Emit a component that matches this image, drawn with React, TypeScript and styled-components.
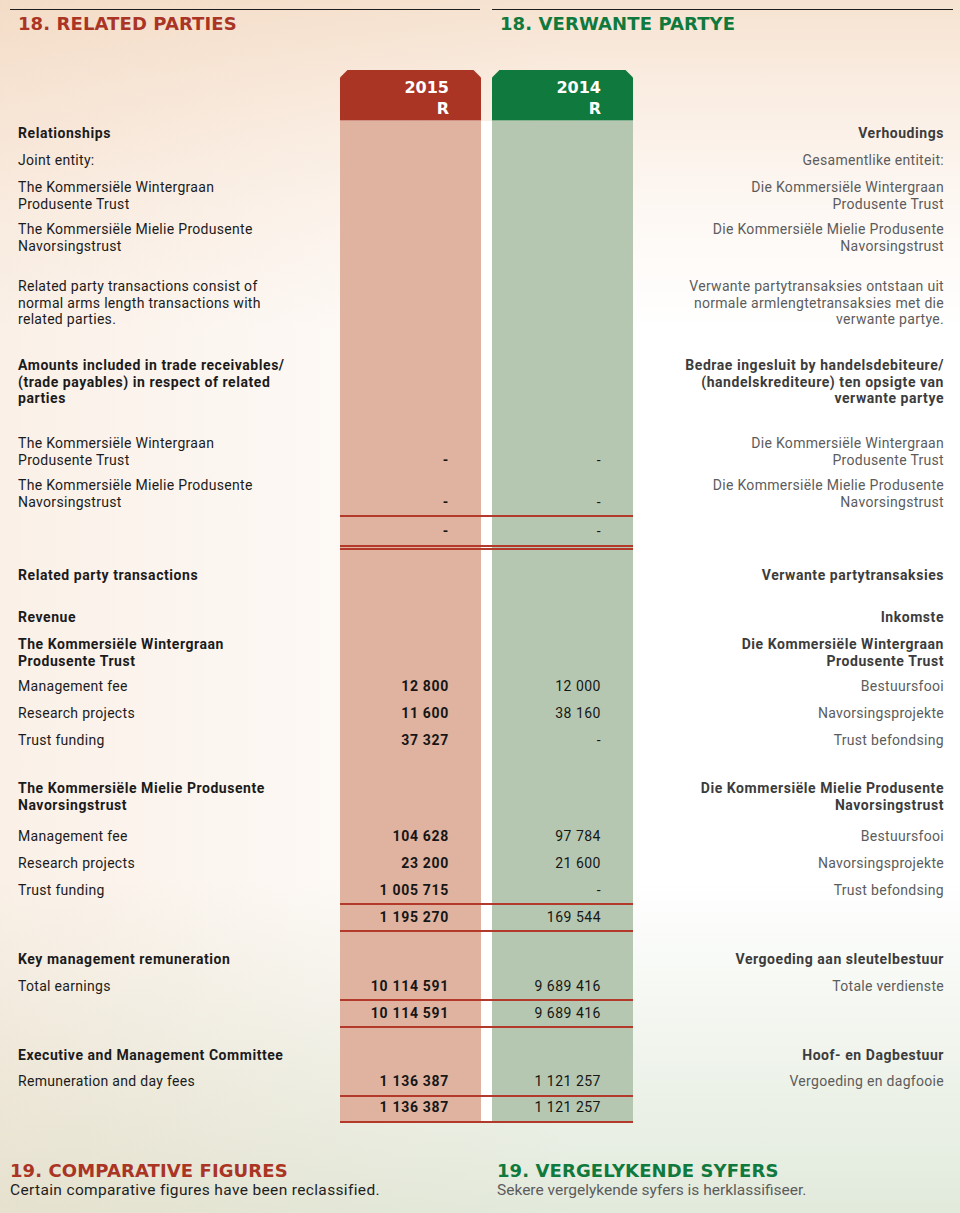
import React from "react";
import styled, { createGlobalStyle } from "styled-components";

const GlobalStyle = createGlobalStyle`
  html, body { margin: 0; padding: 0; background: #ffffff; }
  body { font-family: Roboto, "Liberation Sans", sans-serif; }
  * { box-sizing: border-box; }
`;

const RED = "#aa3525";
const GREEN = "#10793d";
const RULE = "#b3392a";
const COLS = "322px 141px 11px 141px 1fr";

const Page = styled.div`
  width: 960px;
  min-height: 1213px;
  padding-top: 9px;
  background:
    linear-gradient(90deg, rgba(238, 205, 175, 0.3) 0%, rgba(255, 255, 255, 0) 60%),
    linear-gradient(180deg, #f6e3d1 0px, #faede2 90px, #fdf7f2 200px, #ffffff 330px, #ffffff 880px, #f1f5ee 1040px, #e2eadc 1213px);
`;

const TopBar = styled.div`
  display: grid;
  grid-template-columns: 470px 461px;
  column-gap: 12px;
  padding-left: 10px;
`;

const SectionHead = styled.div`
  border-top: 1.5px solid #1d1d1d;
  padding: 3px 0 0 8px;
`;

const Heading = styled.h2<{ $tone: "red" | "green" }>`
  margin: 0;
  font-family: "DejaVu Sans", "Liberation Sans", sans-serif;
  font-weight: bold;
  font-size: 18px;
  line-height: 22px;
  letter-spacing: 0.1px;
  color: ${(p) => (p.$tone === "red" ? RED : GREEN)};
`;

const Table = styled.div`
  margin-top: 34.5px;
  padding: 0 16px 0 18px;
`;

const Row = styled.div<{ $pt: number }>`
  display: grid;
  grid-template-columns: ${COLS};
  --pt: ${(p) => p.$pt}px;
  font-size: 14px;
  line-height: 16.5px;
  letter-spacing: 0.3px;
`;

const YearHead = styled.div<{ $tone: "red" | "green" }>`
  height: 51px;
  padding: 7px 32px 0 0;
  text-align: right;
  background: ${(p) => (p.$tone === "red" ? RED : GREEN)};
  clip-path: polygon(8px 0, calc(100% - 8px) 0, 100% 8px, 100% 100%, 0 100%, 0 8px);
  color: #ffffff;
  font-family: "DejaVu Sans", "Liberation Sans", sans-serif;
  font-weight: bold;
  font-size: 16px;
  line-height: 21px;
  letter-spacing: 0;
`;

const EnCell = styled.div<{ $bold?: boolean }>`
  padding-top: var(--pt);
  color: #1b1b1b;
  font-weight: ${(p) => (p.$bold ? 700 : 400)};
  letter-spacing: ${(p) => (p.$bold ? "0.55px" : "0.3px")};
`;

const AfCell = styled.div<{ $bold?: boolean }>`
  padding-top: var(--pt);
  text-align: right;
  color: ${(p) => (p.$bold ? "#3c3c3c" : "#5c5c5c")};
  font-weight: ${(p) => (p.$bold ? 700 : 400)};
  letter-spacing: ${(p) => (p.$bold ? "0.55px" : "0.3px")};
`;

const Line = styled.span`
  display: block;
  white-space: nowrap;
`;

const toneBg = (t: "red" | "green" | "gap") =>
  t === "red" ? "#dfb3a0" : t === "green" ? "#b5c7b0" : "#ffffff";

const ValueCell = styled.div<{ $tone: "red" | "green"; $bold?: boolean }>`
  padding: var(--pt) 32px 0 0;
  display: flex;
  align-items: flex-end;
  justify-content: flex-end;
  background: ${(p) => toneBg(p.$tone)};
  color: #161616;
  font-weight: ${(p) => (p.$bold ? 700 : 400)};
  letter-spacing: ${(p) => (p.$bold ? "0.7px" : "0.5px")};
`;

const Gap = styled.div`
  background: #ffffff;
`;

const RuleCell = styled.div<{ $tone: "red" | "green" | "gap"; $double?: boolean }>`
  box-sizing: content-box;
  height: var(--pt);
  background: ${(p) => toneBg(p.$tone)};
  border-bottom: ${(p) => (p.$double ? `5px double ${RULE}` : `2px solid ${RULE}`)};
`;

const Footer = styled.div`
  margin-top: 38.5px;
  display: grid;
  grid-template-columns: 487px 1fr;
  padding-left: 10px;
`;

const FootHeading = styled(Heading)`
  line-height: 20px;
`;

const FootText = styled.p<{ $tone: "red" | "green" }>`
  margin: 0;
  font-size: 15.5px;
  line-height: 19px;
  letter-spacing: ${(p) => (p.$tone === "red" ? "0.35px" : "0px")};
  color: ${(p) => (p.$tone === "red" ? "#1e1e1e" : "#5c5c5c")};
`;

type TextRow = {
  kind: "row";
  pt: number;
  en?: string[];
  af?: string[];
  bold?: boolean;
  v15?: string;
  v14?: string;
};
type RuleRow = { kind: "rule"; pt: number; double?: boolean };
type RowDef = TextRow | RuleRow;

const WG_EN = ["The Kommersiële Wintergraan", "Produsente Trust"];
const WG_AF = ["Die Kommersiële Wintergraan", "Produsente Trust"];
const MP_EN = ["The Kommersiële Mielie Produsente", "Navorsingstrust"];
const MP_AF = ["Die Kommersiële Mielie Produsente", "Navorsingstrust"];

const r = (pt: number, en?: string[], af?: string[], v15?: string, v14?: string, bold?: boolean): TextRow => ({
  kind: "row",
  pt,
  en,
  af,
  v15,
  v14,
  bold,
});
const rule = (pt: number, double?: boolean): RuleRow => ({ kind: "rule", pt, double });

const rows: RowDef[] = [
  r(4.75, ["Relationships"], ["Verhoudings"], undefined, undefined, true),
  r(10.5, ["Joint entity:"], ["Gesamentlike entiteit:"]),
  r(10.5, WG_EN, WG_AF),
  r(9, MP_EN, MP_AF),
  r(
    24,
    ["Related party transactions consist of", "normal arms length transactions with", "related parties."],
    ["Verwante partytransaksies ontstaan uit", "normale armlengtetransaksies met die", "verwante partye."]
  ),
  r(
    29.5,
    ["Amounts included in trade receivables/", "(trade payables) in respect of related", "parties"],
    ["Bedrae ingesluit by handelsdebiteure/", "(handelskrediteure) ten opsigte van", "verwante partye"],
    undefined,
    undefined,
    true
  ),
  r(28.5, WG_EN, WG_AF, "-", "-"),
  r(9, MP_EN, MP_AF, "-", "-"),
  rule(4.25),
  r(6.75, undefined, undefined, "-", "-"),
  rule(4.75, true),
  r(17.75, ["Related party transactions"], ["Verwante partytransaksies"], undefined, undefined, true),
  r(25.5, ["Revenue"], ["Inkomste"], undefined, undefined, true),
  r(10.5, WG_EN, WG_AF, undefined, undefined, true),
  r(9, ["Management fee"], ["Bestuursfooi"], "12 800", "12 000"),
  r(10.5, ["Research projects"], ["Navorsingsprojekte"], "11 600", "38 160"),
  r(10.5, ["Trust funding"], ["Trust befondsing"], "37 327", "-"),
  r(31.5, MP_EN, MP_AF, undefined, undefined, true),
  r(15, ["Management fee"], ["Bestuursfooi"], "104 628", "97 784"),
  r(10.5, ["Research projects"], ["Navorsingsprojekte"], "23 200", "21 600"),
  r(10.5, ["Trust funding"], ["Trust befondsing"], "1 005 715", "-"),
  rule(3.75),
  r(4.75, undefined, undefined, "1 195 270", "169 544"),
  rule(3.75),
  r(19.75, ["Key management remuneration"], ["Vergoeding aan sleutelbestuur"], undefined, undefined, true),
  r(10.5, ["Total earnings"], ["Totale verdienste"], "10 114 591", "9 689 416"),
  rule(3.75),
  r(4.75, undefined, undefined, "10 114 591", "9 689 416"),
  rule(3.75),
  r(19.75, ["Executive and Management Committee"], ["Hoof- en Dagbestuur"], undefined, undefined, true),
  r(9.5, ["Remuneration and day fees"], ["Vergoeding en dagfooie"], "1 136 387", "1 121 257"),
  rule(4.75),
  r(2.75, undefined, undefined, "1 136 387", "1 121 257"),
  rule(4.75),
];

const Lines = ({ lines }: { lines?: string[] }) => (
  <>
    {(lines ?? []).map((l, i) => (
      <Line key={i}>{l}</Line>
    ))}
  </>
);

export default function App() {
  return (
    <>
      <GlobalStyle />
      <Page>
        <TopBar>
          <SectionHead>
            <Heading $tone="red">18. RELATED PARTIES</Heading>
          </SectionHead>
          <SectionHead>
            <Heading $tone="green">18. VERWANTE PARTYE</Heading>
          </SectionHead>
        </TopBar>

        <Table>
          <Row $pt={0}>
            <div />
            <YearHead $tone="red">
              <Line>2015</Line>
              <Line>R</Line>
            </YearHead>
            <div />
            <YearHead $tone="green">
              <Line>2014</Line>
              <Line>R</Line>
            </YearHead>
            <div />
          </Row>
          {rows.map((row, i) =>
            row.kind === "rule" ? (
              <Row key={i} $pt={row.pt}>
                <div />
                <RuleCell $tone="red" $double={row.double} />
                <RuleCell $tone="gap" $double={row.double} />
                <RuleCell $tone="green" $double={row.double} />
                <div />
              </Row>
            ) : (
              <Row key={i} $pt={row.pt}>
                <EnCell $bold={row.bold}>
                  <Lines lines={row.en} />
                </EnCell>
                <ValueCell $tone="red" $bold>
                  {row.v15 ?? ""}
                </ValueCell>
                <Gap />
                <ValueCell $tone="green">{row.v14 ?? ""}</ValueCell>
                <AfCell $bold={row.bold}>
                  <Lines lines={row.af} />
                </AfCell>
              </Row>
            )
          )}
        </Table>

        <Footer>
          <div>
            <FootHeading $tone="red">19. COMPARATIVE FIGURES</FootHeading>
            <FootText $tone="red">Certain comparative figures have been reclassified.</FootText>
          </div>
          <div>
            <FootHeading $tone="green">19. VERGELYKENDE SYFERS</FootHeading>
            <FootText $tone="green">Sekere vergelykende syfers is herklassifiseer.</FootText>
          </div>
        </Footer>
      </Page>
    </>
  );
}
